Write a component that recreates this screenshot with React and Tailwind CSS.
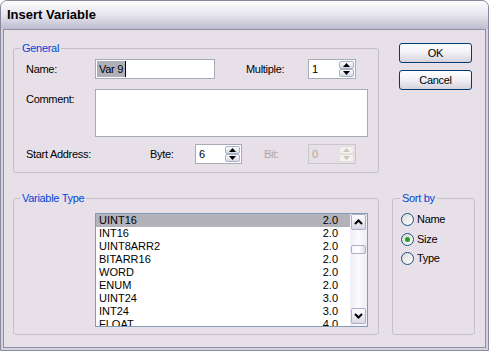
import React from 'react';

const ITEMS = [
  ['UINT16', '2.0'],
  ['INT16', '2.0'],
  ['UINT8ARR2', '2.0'],
  ['BITARR16', '2.0'],
  ['WORD', '2.0'],
  ['ENUM', '2.0'],
  ['UINT24', '3.0'],
  ['INT24', '3.0'],
  ['FLOAT', '4.0'],
];

function Arrow({ up, color = '#000' }) {
  return (
    <svg width="7" height="4" viewBox="0 0 7 4">
      <path d={up ? 'M0 4 L3.5 0 L7 4 Z' : 'M0 0 L3.5 4 L7 0 Z'} fill={color} />
    </svg>
  );
}

function Spin({ value, widthClass, disabled }) {
  const box = disabled ? 'border-[#c8c7ce] bg-[#e8e0e8] text-[#aca899]' : 'border-[#a5acb5] bg-white text-black';
  const btn = disabled
    ? 'border-[#e2e0dc] bg-[#f3f2ef]'
    : 'border-[#a9b1c6] bg-gradient-to-b from-[#fdfdff] to-[#d7d9e4]';
  return (
    <div className={`flex h-[20px] items-stretch border ${box} ${widthClass}`}>
      <span className="flex-1 pl-[3px] leading-[18px]">{value}</span>
      <div className="flex w-[16px] flex-col py-[1px] pr-[1px]">
        <div className={`flex flex-1 items-center justify-center rounded-[2px] border ${btn}`}>
          <Arrow up color={disabled ? '#c9c7ba' : '#000'} />
        </div>
        <div className={`flex flex-1 items-center justify-center rounded-[2px] border ${btn}`}>
          <Arrow color={disabled ? '#c9c7ba' : '#000'} />
        </div>
      </div>
    </div>
  );
}

function Chevron({ up }) {
  return (
    <svg width="9" height="6" viewBox="0 0 9 6">
      <path d={up ? 'M1 5 L4.5 1.5 L8 5' : 'M1 1 L4.5 4.5 L8 1'} stroke="#000" strokeWidth="2" fill="none" />
    </svg>
  );
}

function Radio({ label, checked }) {
  return (
    <div className="flex h-[13px] items-center gap-[3px]">
      <div className="flex h-[13px] w-[13px] items-center justify-center rounded-full border border-[#1c5180] bg-gradient-to-br from-[#dcdad4] to-white">
        {checked && <div className="h-[5px] w-[5px] rounded-full bg-[#21a121]" />}
      </div>
      <span className="leading-[13px]">{label}</span>
    </div>
  );
}

function Button({ children }) {
  return (
    <div className="h-[20px] w-[73px] rounded-[3px] border border-[#003c74] bg-gradient-to-b from-white via-[#f1eff4] to-[#d5d2dc] text-center leading-[18px]">
      {children}
    </div>
  );
}

export default function App() {
  return (
    <div className="h-[351px] w-[489px] overflow-hidden bg-white text-[11px] tracking-[-0.3px] text-black [font-family:'Liberation_Sans',Arial,sans-serif]">
      <div className="flex h-full flex-col rounded-t-[7px] border border-[#8a899d] bg-[#d3d2df]">
        {/* title bar */}
        <div className="flex h-[28px] items-center rounded-t-[6px] bg-gradient-to-b from-[#fdfdfe] via-[#e6e5ee] to-[#bebdcf] pl-[6px] text-[13px] font-bold tracking-normal">
          Insert Variable
        </div>
        {/* body */}
        <div className="mx-[2px] mb-[2px] flex flex-1 flex-col border border-[#8f8ea2] bg-[#e8e0e8] pl-[9px] pt-[12px]">
          <div className="flex items-start">
            <fieldset className="w-[366px] rounded-[3px] border border-[#c2c1c9] pb-[8px]">
              <legend className="ml-[6px] px-[2px] leading-[13px] text-[#0046d5]">General</legend>
              <div className="pl-[12px]">
                <div className="mt-[4px] flex h-[20px] items-center">
                  <span className="w-[69px]">Name:</span>
                  <div className="flex h-[20px] w-[120px] items-center border border-[#a5acb5] bg-white pl-[1px]">
                    <span className="bg-[#b1b0b8] px-[2px] leading-[16px]">Var 9</span>
                    <span className="h-[16px] w-[1px] bg-black" />
                  </div>
                  <span className="ml-[31px] w-[62px]">Multiple:</span>
                  <Spin value="1" widthClass="w-[48px]" />
                </div>
                <div className="mt-[10px] flex items-start">
                  <span className="w-[69px] pt-[4px] leading-[13px]">Comment:</span>
                  <div className="h-[48px] w-[273px] border border-[#a5acb5] bg-white" />
                </div>
                <div className="mt-[7px] flex h-[20px] items-center">
                  <span className="w-[124px]">Start Address:</span>
                  <span className="w-[45px]">Byte:</span>
                  <Spin value="6" widthClass="w-[47px]" />
                  <span className="ml-[22px] w-[44px] text-[#aca899]">Bit:</span>
                  <Spin value="0" widthClass="w-[48px]" disabled />
                </div>
              </div>
            </fieldset>
            <div className="ml-[20px] mt-[1px] flex flex-col gap-[7px]">
              <Button>OK</Button>
              <Button>Cancel</Button>
            </div>
          </div>

          <div className="mt-[19px] flex items-stretch">
            <fieldset className="w-[366px] rounded-[3px] border border-[#c2c1c9] pb-[7px]">
              <legend className="ml-[6px] px-[2px] leading-[13px] text-[#0046d5]">Variable Type</legend>
              <div className="ml-[81px] mt-[8px] flex h-[114px] w-[273px] border border-[#7f9db9] bg-white tracking-normal">
                <div className="flex-1 overflow-hidden">
                  {ITEMS.map(([name, size], i) => (
                    <div
                      key={name}
                      className={`flex h-[13px] justify-between pl-[3px] pr-[12px] leading-[13px] ${i === 0 ? 'bg-[#b3b2ba]' : ''}`}
                    >
                      <span>{name}</span>
                      <span>{size}</span>
                    </div>
                  ))}
                </div>
                <div className="flex w-[17px] flex-col bg-gradient-to-r from-[#eeedf5] via-[#fbfbfd] to-[#eeedf5] px-[1px]">
                  <div className="flex h-[16px] w-[15px] items-center justify-center rounded-[2px] border border-[#aeadc3] bg-gradient-to-b from-[#fdfdff] to-[#d9d8e5]">
                    <Chevron up />
                  </div>
                  <div className="mt-[15px] h-[9px] w-[15px] rounded-[2px] border border-[#aeadc3] bg-gradient-to-r from-[#f4f4f8] via-white to-[#dcdbe6]" />
                  <div className="flex-1" />
                  <div className="mb-[2px] flex h-[16px] w-[15px] items-center justify-center rounded-[2px] border border-[#aeadc3] bg-gradient-to-b from-[#fdfdff] to-[#d9d8e5]">
                    <Chevron />
                  </div>
                </div>
              </div>
            </fieldset>
            <fieldset className="ml-[13px] w-[83px] rounded-[3px] border border-[#c2c1c9]">
              <legend className="ml-[7px] px-[2px] leading-[13px] text-[#0046d5]">Sort by</legend>
              <div className="ml-[8px] mt-[8px] flex flex-col gap-[6.5px]">
                <Radio label="Name" />
                <Radio label="Size" checked />
                <Radio label="Type" />
              </div>
            </fieldset>
          </div>
        </div>
      </div>
    </div>
  );
}
